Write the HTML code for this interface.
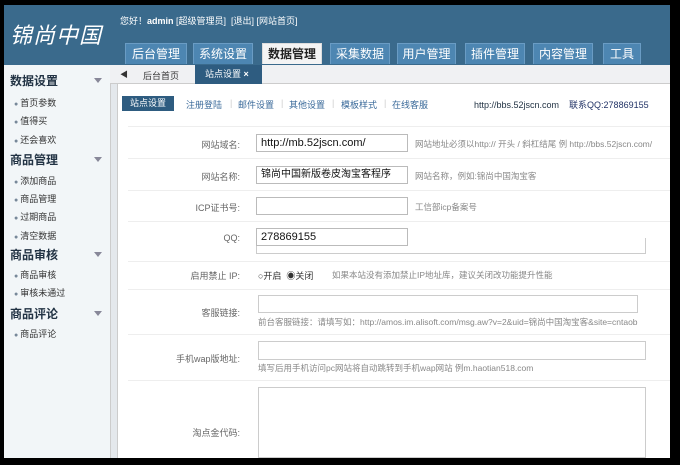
<!DOCTYPE html>
<html><head><meta charset="utf-8"><style>
*{margin:0;padding:0;box-sizing:border-box}
body{width:680px;height:465px;background:#000;position:relative;overflow:hidden;font-family:"Liberation Sans","Noto Sans CJK SC",sans-serif;font-size:10px;color:#555}
.a{position:absolute}
#hd{left:4px;top:5px;width:666px;height:60px;background:#3a6a8c}
.logo{left:10px;top:18px;color:#fff;font-size:22px;font-style:italic;letter-spacing:1px}
.tab{top:43px;height:21px;background:#4d86b2;color:#fff;font-size:12px;text-align:center;line-height:21px;border:1px solid #6a9cc4;border-bottom:none}
.tab.on{background:#f4f4f4;color:#222;border-color:#ddd}
#side{left:4px;top:65px;width:106px;height:393px;background:#f2f6f8}
.sh{left:10px;font-size:12px;color:#234;font-weight:bold}
.sh:after{content:"";position:absolute;left:84px;top:6px;border:4px solid transparent;border-top:5px solid #889}
.si{left:14px;font-size:9px;color:#333}
.si:before{content:"● ";color:#789;font-size:7px}
#main{left:118px;top:84px;width:552px;height:374px;background:#fff}
.lb{width:120px;text-align:right;font-size:9px;color:#666}
.in{height:18px;border:1px solid #bbb;background:#fff;font-size:11px;color:#111;padding-left:4px;line-height:16px}
.ln{left:128px;width:542px;height:1px;background:#eee}
.hint{font-size:8.5px;color:#888;white-space:nowrap}
.lk{top:98px;font-size:9px;color:#3a6a9a}
</style></head><body>
<div id="hd" class="a"></div>
<div class="a logo">锦尚中国</div>
<div class="a" style="left:120px;top:14px;color:#fff;font-size:9px">您好！<b>admin</b> [超级管理员] &nbsp;[退出] [网站首页]</div>
<div class="a tab" style="left:125px;width:62px">后台管理</div>
<div class="a tab" style="left:193px;width:60px">系统设置</div>
<div class="a tab on" style="left:262px;width:60px;font-weight:bold">数据管理</div>
<div class="a tab" style="left:330px;width:60px">采集数据</div>
<div class="a tab" style="left:397px;width:59px">用户管理</div>
<div class="a tab" style="left:465px;width:60px">插件管理</div>
<div class="a tab" style="left:533px;width:60px">内容管理</div>
<div class="a tab" style="left:603px;width:38px">工具</div>
<div class="a" style="left:110px;top:65px;width:560px;height:19px;background:#f0f1f3;border-bottom:1px solid #ccc"></div>
<div class="a" style="left:120px;top:69px;font-size:8px;color:#333">◀</div>
<div class="a" style="left:143px;top:69px;font-size:9px;color:#333">后台首页</div>
<div class="a" style="left:195px;top:65px;width:67px;height:20px;background:#2e5c80;color:#fff;font-size:9px;line-height:19px;padding-left:10px">站点设置 <b>×</b></div>
<div id="side" class="a"></div>
<div class="a" style="left:110px;top:84px;width:8px;height:374px;background:#e4e8ec;border-left:1px solid #ccc;border-right:1px solid #ccc"></div>
<div class="a sh" style="top:72px">数据设置</div>
<div class="a si" style="top:96px">首页参数</div>
<div class="a si" style="top:114px">值得买</div>
<div class="a si" style="top:133px">还会喜欢</div>
<div class="a sh" style="top:151px">商品管理</div>
<div class="a si" style="top:174px">添加商品</div>
<div class="a si" style="top:192px">商品管理</div>
<div class="a si" style="top:210px">过期商品</div>
<div class="a si" style="top:229px">清空数据</div>
<div class="a sh" style="top:246px">商品审核</div>
<div class="a si" style="top:268px">商品审核</div>
<div class="a si" style="top:286px">审核未通过</div>
<div class="a sh" style="top:305px">商品评论</div>
<div class="a si" style="top:327px">商品评论</div>
<div id="main" class="a"></div>
<div class="a" style="left:122px;top:96px;width:52px;height:15px;background:#2e5c80;color:#fff;font-size:9px;line-height:15px;text-align:center">站点设置</div>
<div class="a lk" style="left:186px">注册登陆</div>
<div class="a lk" style="left:230px;color:#ccc">|</div>
<div class="a lk" style="left:238px">邮件设置</div>
<div class="a lk" style="left:281px;color:#ccc">|</div>
<div class="a lk" style="left:289px">其他设置</div>
<div class="a lk" style="left:332px;color:#ccc">|</div>
<div class="a lk" style="left:341px">模板样式</div>
<div class="a lk" style="left:384px;color:#ccc">|</div>
<div class="a lk" style="left:392px">在线客服</div>
<div class="a" style="left:474px;top:98px;font-size:9px;color:#234;white-space:nowrap">http://bbs.52jscn.com &nbsp;&nbsp; <span style="color:#236">联系QQ:278869155</span></div>
<div class="a ln" style="top:126px"></div>
<div class="a lb" style="left:120px;top:138px">网站域名:</div>
<div class="a in" style="left:256px;top:134px;width:152px">http://mb.52jscn.com/</div>
<div class="a hint" style="left:415px;top:138px">网站地址必须以http:// 开头 / 斜杠结尾 例 http://bbs.52jscn.com/</div>
<div class="a ln" style="top:158px"></div>
<div class="a lb" style="left:120px;top:170px">网站名称:</div>
<div class="a in" style="left:256px;top:166px;width:152px;font-size:10px">锦尚中国新版卷皮淘宝客程序</div>
<div class="a hint" style="left:415px;top:170px">网站名称，例如:锦尚中国淘宝客</div>
<div class="a ln" style="top:190px"></div>
<div class="a lb" style="left:120px;top:201px">ICP证书号:</div>
<div class="a in" style="left:256px;top:197px;width:152px"></div>
<div class="a hint" style="left:415px;top:201px">工信部icp备案号</div>
<div class="a ln" style="top:221px"></div>
<div class="a lb" style="left:120px;top:233px">QQ:</div>
<div class="a" style="left:256px;top:238px;width:390px;height:16px;border:1px solid #ccc;border-top:none"></div>
<div class="a in" style="left:256px;top:228px;width:152px">278869155</div>
<div class="a ln" style="top:261px"></div>
<div class="a lb" style="left:120px;top:269px">启用禁止 IP:</div>
<div class="a" style="left:258px;top:269px;font-size:9px;color:#333">○开启 &nbsp;◉关闭</div>
<div class="a hint" style="left:332px;top:269px">如果本站没有添加禁止IP地址库，建议关闭改功能提升性能</div>
<div class="a ln" style="top:289px"></div>
<div class="a lb" style="left:120px;top:306px">客服链接:</div>
<div class="a" style="left:258px;top:295px;width:380px;height:18px;border:1px solid #ccc"></div>
<div class="a hint" style="left:258px;top:316px">前台客服链接：请填写如：http://amos.im.alisoft.com/msg.aw?v=2&amp;uid=锦尚中国淘宝客&amp;site=cntaob</div>
<div class="a ln" style="top:334px"></div>
<div class="a lb" style="left:120px;top:352px">手机wap版地址:</div>
<div class="a" style="left:258px;top:341px;width:388px;height:19px;border:1px solid #ccc"></div>
<div class="a hint" style="left:258px;top:362px">填写后用手机访问pc网站将自动跳转到手机wap网站 例m.haotian518.com</div>
<div class="a ln" style="top:380px"></div>
<div class="a lb" style="left:120px;top:426px">淘点金代码:</div>
<div class="a" style="left:258px;top:387px;width:388px;height:71px;border:1px solid #ccc"></div>
</body></html>
